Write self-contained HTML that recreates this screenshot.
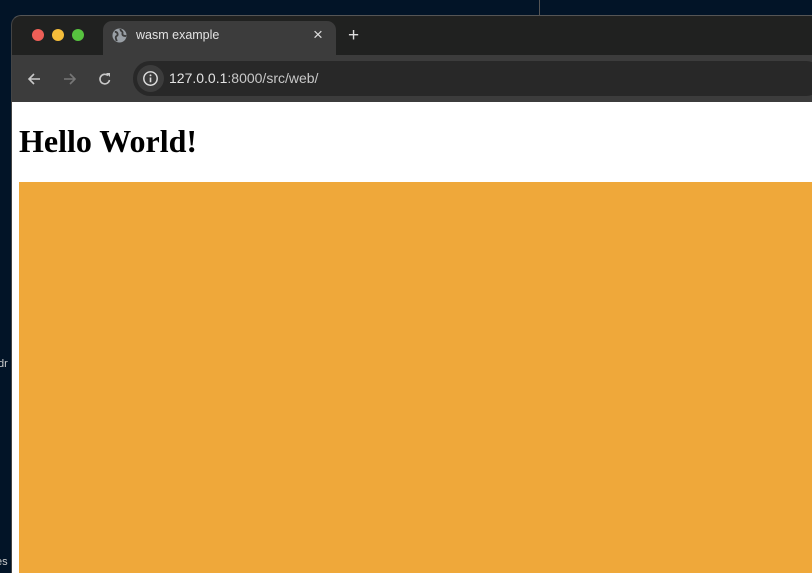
<!DOCTYPE html>
<html><head><meta charset="utf-8"><style>
*{margin:0;padding:0;box-sizing:border-box}
html,body{width:812px;height:573px;overflow:hidden;background:#021427;font-family:"Liberation Sans",sans-serif;position:relative}
.abs{position:absolute}
</style></head><body>
<div class="abs" style="left:539px;top:0;width:1px;height:15px;background:#555"></div>
<div class="abs" style="left:-2px;top:358px;color:#ccc;font-size:11px">dr</div>
<div class="abs" style="left:-4px;top:556px;color:#ccc;font-size:11px">es</div>
<div class="abs" style="left:11px;top:15px;width:801px;height:558px;background:#202120;border-radius:10px 0 0 0;border-top:1px solid #555;border-left:1px solid #444;overflow:hidden">
  <div class="abs" style="left:20px;top:13px;width:12px;height:12px;border-radius:50%;background:#ee5f57"></div>
  <div class="abs" style="left:40px;top:13px;width:12px;height:12px;border-radius:50%;background:#f5bd3a"></div>
  <div class="abs" style="left:60px;top:13px;width:12px;height:12px;border-radius:50%;background:#57c23f"></div>
  <div class="abs" style="left:91px;top:5px;width:233px;height:40px;background:#3c3c3c;border-radius:9px 9px 0 0"></div>
  <svg class="abs" style="left:100px;top:12px" width="15" height="15" viewBox="0 0 16 16"><circle cx="8" cy="8" r="7.5" fill="#9aa0a6"/><path d="M3 4c2 0 3 1 3 3s-2 1-2 3 1 3 1 4M9 1c0 2 1 2 2 3s-1 3 1 4 2 0 3 1" stroke="#3c3c3c" stroke-width="2" fill="none"/></svg>
  <div class="abs" style="left:124px;top:12px;color:#e3e3e3;font-size:12.5px">wasm example</div>
  <div class="abs" style="left:301px;top:9px;color:#ddd;font-size:17px">×</div>
  <div class="abs" style="left:336px;top:9px;color:#ddd;font-size:19px">+</div>
  <div class="abs" style="left:0;top:39px;width:810px;height:47px;background:#3c3c3c"></div>
  <svg class="abs" style="left:14px;top:55px" width="16" height="16" viewBox="0 0 16 16"><path d="M14 8H3M8 3L3 8l5 5" stroke="#c8c8c8" stroke-width="1.6" fill="none"/></svg>
  <svg class="abs" style="left:50px;top:55px" width="16" height="16" viewBox="0 0 16 16"><path d="M2 8h11M8 3l5 5-5 5" stroke="#777" stroke-width="1.6" fill="none"/></svg>
  <svg class="abs" style="left:85px;top:55px" width="16" height="16" viewBox="0 0 16 16"><path d="M12.5 9A4.8 4.8 0 1 1 11 4.5" stroke="#c8c8c8" stroke-width="1.6" fill="none"/><path d="M9 2h4v4z" fill="#c8c8c8"/></svg>
  <div class="abs" style="left:121px;top:45px;width:690px;height:35px;background:#282828;border-radius:17px"></div>
  <div class="abs" style="left:125px;top:49px;width:27px;height:27px;background:#3c3c3c;border-radius:50%"></div>
  <svg class="abs" style="left:130px;top:54px" width="17" height="17" viewBox="0 0 16 16"><circle cx="8" cy="8" r="6.3" stroke="#ddd" stroke-width="1.4" fill="none"/><path d="M8 7v4.5" stroke="#ddd" stroke-width="1.5"/><circle cx="8" cy="5" r="0.9" fill="#ddd"/></svg>
  <div class="abs" style="left:157px;top:54px;color:#e3e3e3;font-size:14px">127.0.0.1<span style="color:#c8c8c8">:8000/src/web/</span></div>
  <div class="abs" style="left:0;top:86px;width:801px;height:471px;background:#fff;overflow:hidden">
    <div class="abs" style="left:7px;top:21px;font-family:'Liberation Serif',serif;font-weight:bold;font-size:32px;color:#000;line-height:37px">Hello World!</div>
    <div class="abs" style="left:7px;top:80px;width:794px;height:391px;background:#efa83a"></div>
  </div>
</div>
</body></html>
